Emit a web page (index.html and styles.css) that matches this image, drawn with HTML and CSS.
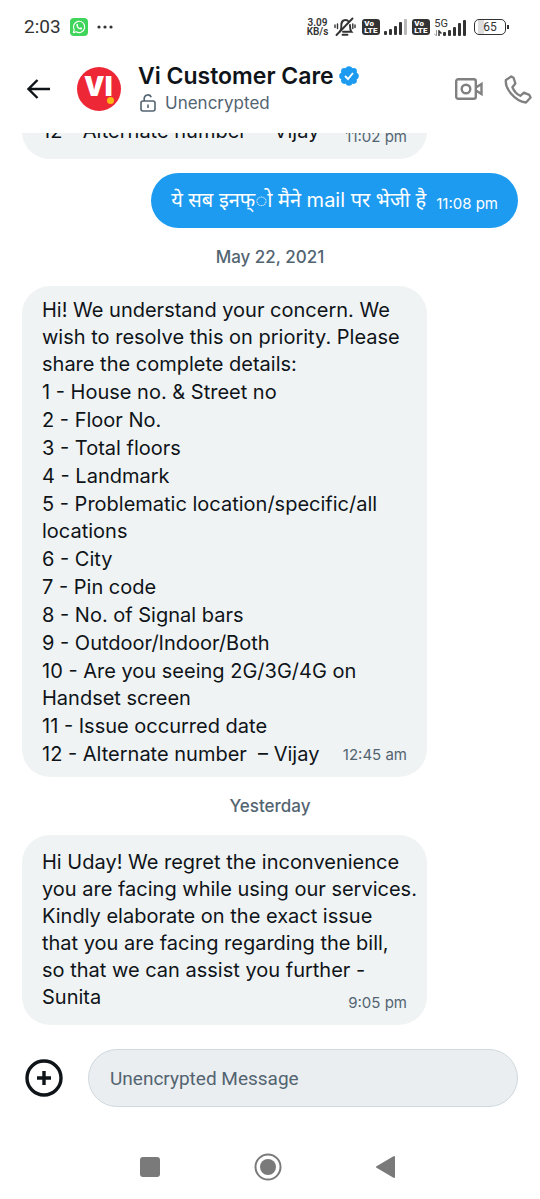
FILE: index.html
```html
<!DOCTYPE html>
<html lang="en">
<head>
<meta charset="utf-8">
<meta name="viewport" content="width=device-width, initial-scale=1">
<title>Vi Customer Care</title>
<link rel="stylesheet" href="styles.css">
</head>
<body>
<div class="status">
  <div class="status-left">
    <time class="clock">2:03</time>
    <svg class="whatsapp" viewBox="0 0 18 18" aria-hidden="true">
      <rect width="18" height="18" rx="4" fill="#3fd45a"/>
      <path d="M3.400 14.600l.8-2.900a5.600 5.600 0 1 1 2.100 2.100z" fill="none" stroke="#fff" stroke-width="1.100" stroke-linejoin="round"/>
      <path d="M6.600 6c.5-.6 1-.4 1.200.1l.4 1c.1.3-.4.7-.5.9.5 1 1.300 1.600 2.200 2 .3-.1.6-.8 1-.7l1.200.6c.3.3-.1 1.400-1.200 1.600-2.400.2-5.300-3-4.300-5.500z" fill="#fff"/>
    </svg>
    <svg class="more" viewBox="0 0 16 4" aria-hidden="true"><g fill="#333"><circle cx="2" cy="2" r="1.600"/><circle cx="8" cy="2" r="1.600"/><circle cx="14" cy="2" r="1.600"/></g></svg>
  </div>
  <div class="status-right">
    <div class="speed"><span>3.09</span><span>KB/s</span></div>
    <svg class="bell" viewBox="0 0 22 20" aria-hidden="true">
      <g fill="none" stroke="#333" stroke-width="1.900" stroke-linecap="round">
        <path d="M6 14.500c1.500-1.500 1.300-3.500 1.300-6 0-3 1.500-5.500 4.200-5.500 1.500 0 2.500.6 3.200 1.500M16 8c0 3 0 5 1.500 6.800H9"/>
        <path d="M2.500 18L18.500 1.500"/><path d="M8.500 17.800h5"/>
        <path d="M3.500 7v4.500M1 8v2.500M18.800 7v4.500M21 8v2.500" stroke-width="1.400"/>
      </g>
    </svg>
    <div class="volte"><span>Vo</span><span>LTE</span></div>
    <svg class="bars" viewBox="0 0 24 17" aria-hidden="true"><g fill="#333"><rect y="13" width="3" height="4" rx="1"/><rect x="5" y="11" width="3" height="6" rx="1"/><rect x="10" y="8" width="3" height="9" rx="1"/><rect x="15" y="4" width="3" height="13" rx="1"/></g><rect x="20" y="1" width="3" height="16" rx="1" fill="#b8b8b8"/></svg>
    <div class="volte"><span>Vo</span><span>LTE</span></div>
    <div class="mobile">
      <div class="network"><span>5G</span>
        <svg class="arrows" viewBox="0 0 8 6" aria-hidden="true"><path d="M2.500 0v6L0 3.500" fill="none" stroke="#999"/><path d="M5 6V1l2.500 2.500" fill="none" stroke="#333" stroke-width="1.500"/></svg>
      </div>
      <svg class="bars" viewBox="0 0 24 17" aria-hidden="true"><g fill="#333"><rect y="13" width="3" height="4" rx="1"/><rect x="5" y="11" width="3" height="6" rx="1"/><rect x="10" y="8" width="3" height="9" rx="1"/><rect x="15" y="4" width="3" height="13" rx="1"/><rect x="20" y="1" width="3" height="16" rx="1"/></g></svg>
    </div>
    <div class="battery">65</div>
  </div>
</div>

<header class="header">
  <button class="icon-button" type="button" aria-label="Back">
    <svg class="back" viewBox="0 0 24 20" aria-hidden="true"><path d="M23 10H2M10.500 1L1.500 10l9 9" fill="none" stroke="#0f1419" stroke-width="2.400"/></svg>
  </button>
  <div class="avatar"><span>VI</span><i></i></div>
  <div class="contact">
    <h1>Vi Customer Care
      <svg class="verified" viewBox="0 0 20 20" aria-hidden="true">
        <g fill="#1d9bf0"><circle cx="10" cy="10" r="8"/><circle cx="10" cy="3.500" r="3.300"/><circle cx="14.600" cy="5.400" r="3.300"/><circle cx="16.500" cy="10" r="3.300"/><circle cx="14.600" cy="14.600" r="3.300"/><circle cx="10" cy="16.500" r="3.300"/><circle cx="5.400" cy="14.600" r="3.300"/><circle cx="3.500" cy="10" r="3.300"/><circle cx="5.400" cy="5.400" r="3.300"/></g>
        <path d="M6 10l3 3 5-6" fill="none" stroke="#fff" stroke-width="1.900"/>
      </svg>
    </h1>
    <p>
      <svg class="lock" viewBox="0 0 16 18" aria-hidden="true"><g fill="none" stroke="#536471" stroke-width="1.600"><rect x="1" y="7" width="14" height="10" rx="2"/><path d="M4.200 7V4.500a3.600 3.600 0 0 1 7-1.200M8 10.500v3.500"/></g></svg>
      Unencrypted
    </p>
  </div>
  <button class="icon-button" type="button" aria-label="Video call">
    <svg class="video" viewBox="0 0 28 22" aria-hidden="true"><g fill="none" stroke="#808080" stroke-width="2.400"><rect x="1.200" y="1.200" width="19.600" height="19.600" rx="2"/><circle cx="11" cy="11" r="4.300"/><path d="M21 9.500l5.500-3.500v10L21 12.500"/></g></svg>
  </button>
  <button class="icon-button" type="button" aria-label="Voice call">
    <svg class="phone" viewBox="0 0 28 29" aria-hidden="true"><path d="M7.300 1.500L1.900 5C.6 13 10.500 26 22 27.500l4.600-5-1.300-2.600-5.400-2.300-3.600 3.200c-3.300-1.500-6.400-5-7.900-8.600l3-3.700-1.900-5.800z" fill="none" stroke="#808080" stroke-width="2.300" stroke-linejoin="round"/></svg>
  </button>
</header>

<main class="chat">
  <article class="bubble">
    <p>12 - Alternate number &nbsp;– Vijay</p>
    <time>11:02 pm</time>
  </article>
  <article class="bubble sent">
    <p lang="hi">ये सब इनफ्ो मैने mail पर भेजी है</p>
    <time>11:08 pm</time>
  </article>
  <h2 class="day">May 22, 2021</h2>
  <article class="bubble details">
    <div class="text">
      <p>Hi! We understand your concern. We wish to resolve this on priority. Please share the complete details:</p>
      <p>1 - House no. &amp; Street no</p>
      <p>2 - Floor No.</p>
      <p>3 - Total floors</p>
      <p>4 - Landmark</p>
      <p>5 - Problematic location/specific/all locations</p>
      <p>6 - City</p>
      <p>7 - Pin code</p>
      <p>8 - No. of Signal bars</p>
      <p>9 - Outdoor/Indoor/Both</p>
      <p>10 - Are you seeing 2G/3G/4G on Handset screen</p>
      <p>11 - Issue occurred date</p>
      <p>12 - Alternate number &nbsp;– Vijay</p>
    </div>
    <time>12:45 am</time>
  </article>
  <h2 class="day">Yesterday</h2>
  <article class="bubble">
    <p>Hi Uday! We regret the inconvenience<br>you are facing while using our services.<br>Kindly elaborate on the exact issue<br>that you are facing regarding the bill,<br>so that we can assist you further -<br>Sunita</p>
    <time>9:05 pm</time>
  </article>
</main>

<form class="composer">
  <button class="icon-button" type="button" aria-label="Add attachment">
    <svg class="plus" viewBox="0 0 38 38" aria-hidden="true"><g fill="none" stroke="#0f1419" stroke-width="3.400"><circle cx="19" cy="19" r="17"/><path d="M19 12v14M12 19h14"/></g></svg>
  </button>
  <input type="text" placeholder="Unencrypted Message" aria-label="Unencrypted Message">
</form>

<nav class="system-nav" aria-label="System">
  <button class="icon-button" type="button" aria-label="Recent apps"><svg viewBox="0 0 28 28" aria-hidden="true"><rect x="4" y="4" width="20" height="20" rx="3" fill="#7a7a7a"/></svg></button>
  <button class="icon-button" type="button" aria-label="Home"><svg viewBox="0 0 28 28" aria-hidden="true"><circle cx="14" cy="14" r="12.500" fill="none" stroke="#7a7a7a" stroke-width="2"/><circle cx="14" cy="14" r="8" fill="#7a7a7a"/></svg></button>
  <button class="icon-button" type="button" aria-label="Go back"><svg viewBox="0 0 28 28" aria-hidden="true"><path d="M22 4v20L5 14z" fill="#7a7a7a" stroke="#7a7a7a" stroke-width="2" stroke-linejoin="round"/></svg></button>
</nav>
</body>
</html>
```

FILE: styles.css
```css
* { box-sizing: border-box; }

body {
  margin: 0;
  height: 100vh;
  display: flex;
  flex-direction: column;
  background: #fff;
  color: #0f1419;
  font-family: Inter, "Noto Sans", sans-serif;
}

h1, h2, p { margin: 0; }
svg { display: block; flex: none; }

.icon-button {
  display: flex;
  align-items: center;
  justify-content: center;
  flex: none;
  padding: 0;
  border: 0;
  background: none;
}

/* Status bar */
.status {
  display: flex;
  justify-content: space-between;
  align-items: center;
  flex: none;
  height: 53px;
  padding: 0 30px 0 24px;
  color: #333;
  font-family: Roboto, sans-serif;
}
.status-left { display: flex; align-items: center; gap: 9px; }
.clock { font-size: 19px; line-height: 24px; }
.whatsapp { width: 18px; height: 18px; }
.more { width: 16px; height: 4px; }
.status-right { display: flex; align-items: center; gap: 4px; }
.speed {
  display: flex;
  flex-direction: column;
  font-size: 10px;
  font-weight: 600;
  line-height: 9px;
  text-align: center;
}
.bell { width: 22px; height: 20px; margin: 0 2px; }
.volte {
  display: flex;
  flex-direction: column;
  width: 18px;
  height: 16px;
  padding: 1px 0 0 2px;
  border-radius: 3px;
  background: #333;
  color: #fff;
  font-size: 8px;
  font-weight: 900;
  line-height: 7px;
}
.bars { width: 24px; height: 17px; }
.mobile { display: flex; align-items: flex-end; }
.network { margin-right: -5px; font-size: 11px; line-height: 12px; }
.arrows { width: 8px; height: 6px; }
.battery {
  position: relative;
  width: 32px;
  height: 16px;
  margin: 0 4px 0 3px;
  border: 1px solid #333;
  border-radius: 5px;
  background: linear-gradient(90deg, #fff 3px, #ddd 3px, #ddd 9px, #fff 9px);
  font-size: 12px;
  line-height: 14px;
  text-align: center;
}
.battery::after {
  content: "";
  position: absolute;
  top: 5px;
  right: -4px;
  width: 2px;
  height: 4px;
  background: #333;
}

/* Conversation header */
.header {
  display: flex;
  align-items: center;
  flex: none;
  height: 80px;
  padding: 0 8px 8px 27px;
}
.back { width: 24px; height: 20px; }
.avatar {
  position: relative;
  flex: none;
  width: 44px;
  height: 44px;
  margin: 0 17px 0 26px;
  border-radius: 50%;
  background: #ee2737;
  color: #fff;
  font-family: "Open Sans", sans-serif;
  font-size: 28px;
  font-weight: 800;
  line-height: 36px;
  text-align: center;
}
.avatar i {
  position: absolute;
  right: 7px;
  bottom: 7px;
  width: 7px;
  height: 7px;
  border-radius: 50%;
  background: #fdb813;
}
.contact { flex: 1; min-width: 0; }
.contact h1 {
  display: flex;
  align-items: center;
  gap: 5px;
  font-size: 23px;
  font-weight: 600;
  line-height: 28px;
}
.verified { width: 20px; height: 20px; }
.contact p {
  display: flex;
  align-items: center;
  gap: 9px;
  padding-left: 2px;
  color: #536471;
  font-size: 17px;
  line-height: 26px;
}
.lock { width: 16px; height: 18px; }
.video { width: 28px; height: 22px; margin-right: 21px; }
.phone { width: 28px; height: 29px; }

/* Messages */
.chat {
  display: flex;
  flex: 1;
  flex-direction: column;
  align-items: flex-start;
  justify-content: flex-end;
  min-height: 0;
  overflow: hidden;
  padding: 0 22px;
}
.bubble {
  display: flex;
  align-items: flex-end;
  justify-content: space-between;
  position: relative;
  flex: none;
  width: 405px;
  max-width: 100%;
  padding: 14px 8px 14px 20px;
  border-radius: 28px;
  background: #eff3f4;
  font-size: 20px;
  line-height: 27px;
}
.bubble time {
  position: absolute;
  right: 20px;
  bottom: 12px;
  color: #536471;
  font-size: 15px;
  line-height: 20px;
}
.details { padding: 11px 20px 9px; }
.text { display: flex; flex-direction: column; gap: 1px; }
.sent {
  gap: 10px;
  align-self: flex-end;
  width: auto;
  margin-top: 14px;
  padding: 14px 20px;
  background: #1d9bf0;
  color: #fff;
}
.sent time { position: static; color: #fff; }
.day {
  align-self: stretch;
  padding: 17px 0;
  color: #536471;
  font-size: 17px;
  font-weight: 500;
  line-height: 24px;
  text-align: center;
}

/* Composer */
.composer {
  display: flex;
  align-items: center;
  flex: none;
  gap: 25px;
  padding: 24px 22px 0 25px;
}
.plus { width: 38px; height: 38px; }
.composer input {
  flex: 1;
  min-width: 0;
  height: 58px;
  padding: 0 21px;
  border: 1px solid #cfd9de;
  border-radius: 29px;
  background: #ebeef0;
  color: #0f1419;
  font-family: Roboto, sans-serif;
  font-size: 19px;
}
.composer input::placeholder { color: #536471; opacity: 1; }

/* Android navigation bar */
.system-nav {
  display: flex;
  align-items: center;
  justify-content: center;
  flex: none;
  gap: 90px;
  height: 92px;
  padding: 28px 4px 0 0;
}
.system-nav svg { width: 28px; height: 28px; }
```
